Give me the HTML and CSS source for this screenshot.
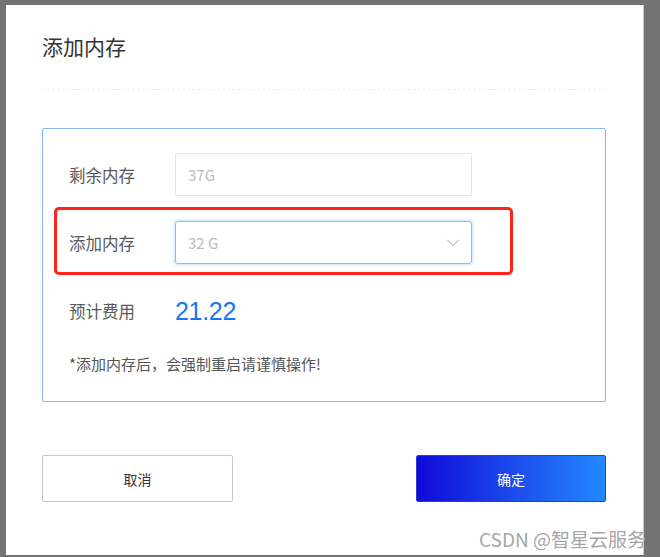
FILE: index.html
```html
<!DOCTYPE html>
<html lang="zh-CN">
<head>
<meta charset="utf-8">
<title>添加内存</title>
<link rel="stylesheet" href="styles.css">
</head>
<body>
<div class="modal">
  <h2 class="modal-title">添加内存</h2>
  <div class="divider"></div>
  <div class="form-box">
    <div class="row">
      <span class="label">剩余内存</span>
      <div class="input">37G</div>
    </div>
    <div class="row row-select">
      <span class="label">添加内存</span>
      <div class="select">
        <span>32 G</span>
        <svg class="chevron" width="12" height="8" viewBox="0 0 12 8"><path d="M0.5 0.8 L6 6.8 L11.5 0.8" fill="none" stroke="#b8b8b8" stroke-width="1.1"/></svg>
      </div>
      <div class="highlight"></div>
    </div>
    <div class="row row-price">
      <span class="label">预计费用</span>
      <span class="price">21.22</span>
    </div>
    <p class="note">*添加内存后，会强制重启请谨慎操作!</p>
  </div>
  <div class="actions">
    <button class="btn btn-cancel">取消</button>
    <button class="btn btn-ok">确定</button>
  </div>
</div>
<div class="watermark">CSDN @智星云服务</div>
</body>
</html>
```
FILE: styles.css
```css
html, body {
  margin: 0;
  padding: 0;
}
body {
  background: #737373;
  width: 660px;
  height: 557px;
  overflow: hidden;
  position: relative;
  font-family: "Noto Sans CJK SC", "Noto Sans", sans-serif;
}
.modal {
  box-sizing: border-box;
  margin: 5px 0 0 6px;
  width: 638px;
  height: 550px;
  background: #fff;
  border-right: 1px solid #c8c8c8;
  padding: 26px 37px 0 36px;
}
.modal-title {
  margin: 0;
  font-size: 21px;
  line-height: 30px;
  font-weight: normal;
  color: #333;
}
.divider {
  margin-top: 28px;
  border-top: 1px dashed #ececec;
}
.form-box {
  box-sizing: border-box;
  margin-top: 38px;
  height: 274px;
  border: 1px solid #85b6f6;
  border-radius: 2px;
  padding: 24px 0 0 26px;
}
.row {
  display: flex;
  align-items: center;
  position: relative;
}
.row-select {
  margin-top: 25px;
}
.label {
  width: 106px;
  font-size: 16.5px;
  color: #5a5a5a;
}
.input, .select {
  box-sizing: border-box;
  width: 297px;
  height: 43px;
  display: flex;
  align-items: center;
  padding-left: 12px;
  font-size: 15px;
  color: #bbb;
  border: 1px solid #e4e4e4;
  border-radius: 2px;
}
.select {
  border: 1px solid #7fc0f8;
  border-radius: 3px;
  box-shadow: 0 0 3px 1px #c4e3fd;
  justify-content: space-between;
  padding-right: 12px;
}
.chevron {
  display: block;
  margin-top: 1px;
}
.highlight {
  position: absolute;
  left: -15px;
  top: -14px;
  width: 459px;
  height: 68px;
  box-sizing: border-box;
  border: 3px solid #ff2318;
  border-radius: 5px;
}
.row-price {
  margin-top: 32px;
  height: 30px;
}
.price {
  font-family: "Liberation Sans", Arial, sans-serif;
  font-size: 25px;
  color: #1677f5;
  letter-spacing: -0.3px;
}
.note {
  margin: 28px 0 0;
  font-size: 15px;
  line-height: 20px;
  color: #555;
}
.actions {
  display: flex;
  justify-content: space-between;
  margin-top: 53px;
}
.btn {
  box-sizing: border-box;
  width: 191px;
  height: 47px;
  font-family: inherit;
  font-size: 14px;
  border-radius: 2px;
  cursor: pointer;
}
.btn-cancel {
  background: #fff;
  border: 1px solid #c6c6c6;
  color: #333;
}
.btn-ok {
  width: 190px;
  border: 1px solid #2a3fd0;
  color: #fff;
  background: linear-gradient(90deg, #0f0ad8 0%, #1d50ee 55%, #2388ff 100%);
}
.watermark {
  position: absolute;
  right: 14px;
  bottom: 5px;
  font-size: 19px;
  color: #a6a6a6;
  text-shadow: 0 0 1px #fff;
  font-family: "Noto Sans CJK SC", sans-serif;
}
```
